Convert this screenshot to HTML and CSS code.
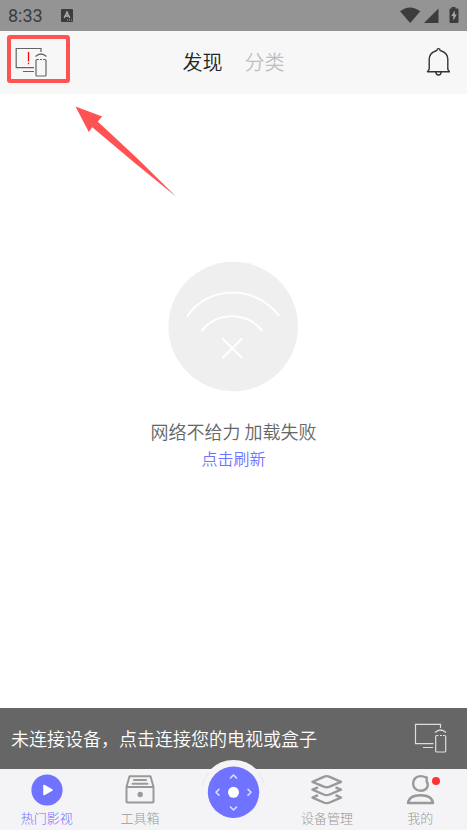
FILE: index.html
```html
<!DOCTYPE html>
<html lang="zh-CN">
<head>
<meta charset="utf-8">
<meta name="viewport" content="width=device-width, initial-scale=1">
<title>发现</title>
<link rel="stylesheet" href="styles.css">
</head>
<body>
<div class="app">
  <div class="status">
    <span class="clock">8:33</span>
    <svg class="keyboard" width="12" height="13" viewBox="0 0 12 13" aria-hidden="true"><rect width="12" height="13" rx="1" fill="#3c3c3c"/><path d="M3.200 9 6 3l2.800 6M4.200 7h3.600" fill="none" stroke="#b5b5b5" stroke-width="1.300"/><path d="M6 11h1M8 11h1M10 11h1" stroke="#aaa"/></svg>
    <svg class="signals" width="59" height="18" viewBox="400 7 59 18" aria-hidden="true">
      <path d="M400 11.200Q410 3.600 420.300 11.200L410.200 23Z" fill="#3c3c3c"/>
      <path d="M438.500 8.500V23H424Z" fill="#3c3c3c"/>
      <path d="M451.500 7h4v1.500h2q1 0 1 1v12.500q0 1-1 1h-7q-1 0-1-1V9.500q0-1 1-1h1Z" fill="#3c3c3c"/>
      <path d="m454.800 10.500-3.500 5.500h2v4.500l3.500-6h-2Z" fill="#aaa"/>
    </svg>
  </div>
  <header class="header">
    <button class="connect" type="button" aria-label="连接设备">
      <svg width="34" height="32" viewBox="14 46 34 32" fill="none" stroke="#626660" stroke-width="1.200" aria-hidden="true">
        <path d="M41 52v-3.500H16.200v19.200H34M23 71.500h11M35.500 56.500q5.500-5 11 0"/>
        <rect x="36" y="59.500" width="10" height="16.500" rx="1"/>
        <path d="M39 59.500h4" stroke="#f7f7f7"/><path d="M40 59.500h2"/>
        <path d="M28.500 52v9.500M28.500 62.800v1.500" stroke="#f00" stroke-width="1.300"/>
      </svg>
    </button>
    <nav class="tabs"><a class="tab tab-on" href="#discover">发现</a><a class="tab" href="#category">分类</a></nav>
    <button class="bell" type="button" aria-label="通知">
      <svg width="24" height="30" viewBox="426 47 24 30" fill="none" stroke="#343434" stroke-width="1.400" stroke-linejoin="round" aria-hidden="true"><path d="M427.500 71.700h22l-1.700-2.300V59.200q0-5.800-6.300-8.200l-1.500-.7q0-1.700-1.500-1.700t-1.500 1.700l-1.500.7q-6.300 2.400-6.300 8.200v10.200ZM435.800 72q.2 3 2.700 3t2.700-3"/></svg>
    </button>
    <svg class="pointer" width="104" height="94" viewBox="74 105 104 94" aria-hidden="true"><path d="m75.500 106.500 26.700 10-4.500 5Q138 158 176.500 197 134 163 92.300 127.300L88.800 132Z" fill="#ff5353"/></svg>
  </header>
  <main class="main">
    <svg class="offline" width="131" height="130" viewBox="168 262 131 130" fill="none" stroke="#fff" stroke-width="2" stroke-linecap="round" aria-hidden="true"><circle cx="233.200" cy="326.500" r="64.800" fill="#efefef" stroke="none"/><path d="M187.500 316C207 286 254 284 278.500 315M202 330.500C217 312 246 311 262 330.500M223 339l18.500 18.500M241.500 339 223 357.500"/></svg>
    <p class="message">网络不给力 加载失败</p>
    <button class="refresh" type="button">点击刷新</button>
  </main>
  <button class="banner" type="button">
    <span>未连接设备，点击连接您的电视或盒子</span>
    <svg width="34" height="32" viewBox="414 722 34 32" fill="none" stroke="#ddd" stroke-width="1.200" aria-hidden="true"><path d="M440.500 728v-3.700h-25v19.400h18M423 747.500h10M435 732.500q5.500-5 11 0"/><rect x="435.700" y="735.500" width="10" height="16.500" rx="1"/><path d="M438.500 735.500h4.500" stroke="#666"/><path d="M440 735.500h2"/></svg>
  </button>
  <nav class="bottom">
    <a class="item item-on" href="#hot">
      <svg width="32" height="32" viewBox="0 0 32 32" aria-hidden="true"><circle cx="16" cy="16" r="15.600" fill="#6f73ff"/><path d="M13 11.500v9l8-4.500Z" fill="#fff" stroke="#fff" stroke-width="1.600" stroke-linejoin="round"/></svg>
      <span>热门影视</span>
    </a>
    <a class="item" href="#tools">
      <svg width="32" height="32" viewBox="124 774 32 32" fill="none" stroke="#999" stroke-width="2" stroke-linejoin="round" stroke-linecap="round" aria-hidden="true"><path d="M126.500 787v14.500q0 1 1 1h25q1 0 1-1V787l-3-10.700h-21Zm0 0h27M134 780h12M132.500 783.700h15"/><circle cx="140.200" cy="794.500" r="1.700" fill="#999"/></svg>
      <span>工具箱</span>
    </a>
    <a class="remote" href="#remote" aria-label="遥控器">
      <svg width="66" height="68" viewBox="200 759 66 68" fill="none" stroke="#fff" stroke-width="1.600" stroke-linecap="round" stroke-linejoin="round" aria-hidden="true"><circle cx="233.500" cy="792.200" r="32.300" fill="#f4f4f6" stroke="none"/><path d="M202.400 785a32.300 32.300 0 0 1 6-12M258.600 773a32.300 32.300 0 0 1 6 12" stroke="#e8e8ea" stroke-width="1"/><circle cx="233.500" cy="792.200" r="25.700" fill="#6f73ff" stroke="none"/><circle cx="233.500" cy="792.300" r="5.500" fill="#fff" stroke="none"/><g stroke="#dfe0ff"><path d="m230.500 778 3-3 3 3M230.500 807l3 3 3-3M219 789.300l-3 3 3 3M248 789.300l3 3-3 3"/></g></svg>
    </a>
    <a class="item" href="#devices">
      <svg width="32" height="32" viewBox="311 774 32 32" fill="none" stroke="#999" stroke-width="2.400" stroke-linejoin="round" aria-hidden="true"><path d="m312.500 781.800 11.200-5q3-1.400 6 0l11.300 5-11.300 4.800q-3 1.300-6 0ZM318 787.300l-5.500 2.400 11.200 4.800q3 1.300 6 0l11.300-4.800-5.500-2.400M318 795.200l-5.500 2.400 11.200 4.900q3 1.300 6 0l11.300-4.900-5.500-2.400"/></svg>
      <span>设备管理</span>
    </a>
    <a class="item" href="#me">
      <svg width="32" height="32" viewBox="404 774 32 32" fill="none" stroke="#999" stroke-width="2.400" stroke-linejoin="round" aria-hidden="true"><path d="M426 777.500q-2.500-1.400-5.500-1.400c-9.800 0-9.800 14.700 0 14.700 7 0 8.500-6 6.200-9.300v-4ZM408 803q1-7.800 12.500-7.800T433 803Z"/></svg>
      <span>我的</span>
      <i class="dot"></i>
    </a>
  </nav>
</div>
</body>
</html>
```

FILE: styles.css
```css
* { box-sizing: border-box; }
body { margin: 0; background: #fff; font-family: "Noto Sans CJK SC", sans-serif; font-weight: 350; }
button { margin: 0; padding: 0; border: 0; background: none; font: inherit; color: inherit; cursor: pointer; }
a { color: inherit; text-decoration: none; }
svg { display: block; flex: none; }
p { margin: 0; }

.app { display: flex; flex-direction: column; min-height: 100vh; }

.status { display: flex; align-items: center; height: 31px; padding: 0 8px; background: #949494; color: #3c3c3c; }
.clock { font: 400 18px/31px Roboto, sans-serif; }
.keyboard { margin-left: 18px; }
.signals { margin-left: auto; }

.header { position: relative; display: grid; grid-template-columns: 1fr auto 1fr; align-items: center; height: 63px; padding: 0 17px; background: #f7f7f7; }
.connect { display: flex; align-items: center; width: 63px; height: 48px; margin: 0 0 8px -10px; padding: 6px 0 0 3px; border: 4px solid #ff5353; border-radius: 3px; }
.tabs { display: flex; gap: 22px; padding-bottom: 2px; font-size: 20px; line-height: 30px; color: #bdbfc5; }
.tab-on { color: #202626; }
.bell { justify-self: end; padding-bottom: 2px; }
.pointer { position: absolute; left: 74px; top: 74px; }

.main { flex: 1; display: flex; flex-direction: column; align-items: center; padding-top: 168px; }
.message { margin-top: 26px; font-size: 18px; line-height: 26px; color: #666; }
.refresh { font-size: 16px; line-height: 28px; color: #6f73ff; }

.banner { display: flex; align-items: center; justify-content: space-between; height: 61px; padding: 0 19px 2px 11px; background: #666; color: #fff; font-size: 18px; text-align: left; }

.bottom { display: grid; grid-template-columns: repeat(5, 1fr); height: 61px; background: #f4f4f6; color: #999; }
.item { position: relative; display: flex; flex-direction: column; align-items: center; padding-top: 5px; font-size: 13px; font-weight: 300; line-height: 24px; }
.item-on { color: #6f73ff; }
.remote { display: flex; justify-content: center; margin-top: -10px; }
.dot { position: absolute; left: calc(50% + 12px); top: 8px; width: 8px; height: 8px; border-radius: 50%; background: #ff3030; }
```
